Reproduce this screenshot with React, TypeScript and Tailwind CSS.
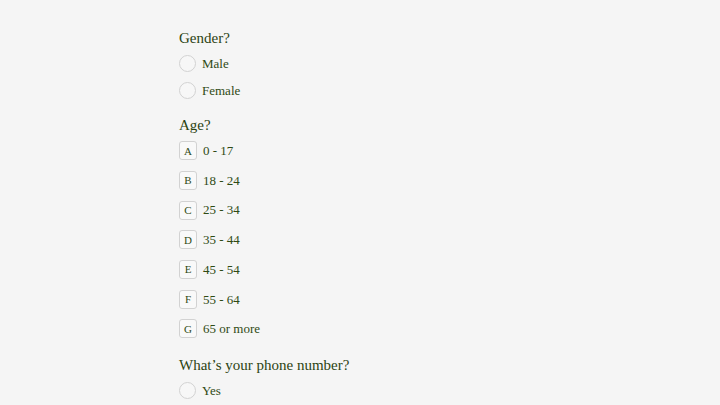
import React from 'react';

const serif = { fontFamily: '"Liberation Serif", "DejaVu Serif", serif' };

const Radio: React.FC<{ label: string }> = ({ label }) => (
  <div className="flex items-center h-[27px]">
    <span className="w-[17px] h-[17px] rounded-full border border-[#d2d2d2] bg-[#f7f7f7]" />
    <span className="ml-[6px] text-[13px] text-[#2f4a14]">{label}</span>
  </div>
);

const Choice: React.FC<{ letter: string; label: string }> = ({ letter, label }) => (
  <div className="flex items-center h-[29.7px]">
    <span className="w-[18px] h-[19px] flex items-center justify-center rounded-[3px] border border-[#d2d2d2] bg-[#f9f9f9] text-[11px] text-[#2f4a14]">
      {letter}
    </span>
    <span className="ml-[6px] text-[13px] text-[#2f4a14]">{label}</span>
  </div>
);

export default function App() {
  const ages = [
    ['A', '0 - 17'],
    ['B', '18 - 24'],
    ['C', '25 - 34'],
    ['D', '35 - 44'],
    ['E', '45 - 54'],
    ['F', '55 - 64'],
    ['G', '65 or more'],
  ];

  return (
    <div className="w-[720px] h-[405px] bg-[#f5f5f5] overflow-hidden" style={serif}>
      <div className="mx-auto w-[362px] pt-[27px] flex flex-col">
        <h2 className="text-[15px] text-[#2c4312] h-[22px] leading-[22px]">Gender?</h2>
        <div className="mt-[1px]">
          <Radio label="Male" />
          <Radio label="Female" />
        </div>

        <h2 className="mt-[10px] text-[15px] text-[#2c4312] h-[22px] leading-[22px]">Age?</h2>
        <div>
          {ages.map(([l, t]) => (
            <Choice key={l} letter={l} label={t} />
          ))}
        </div>

        <h2 className="mt-[10px] text-[15px] text-[#2c4312] h-[22px] leading-[22px]">What’s your phone number?</h2>
        <div className="mt-[1px]">
          <Radio label="Yes" />
        </div>
      </div>
    </div>
  );
}
